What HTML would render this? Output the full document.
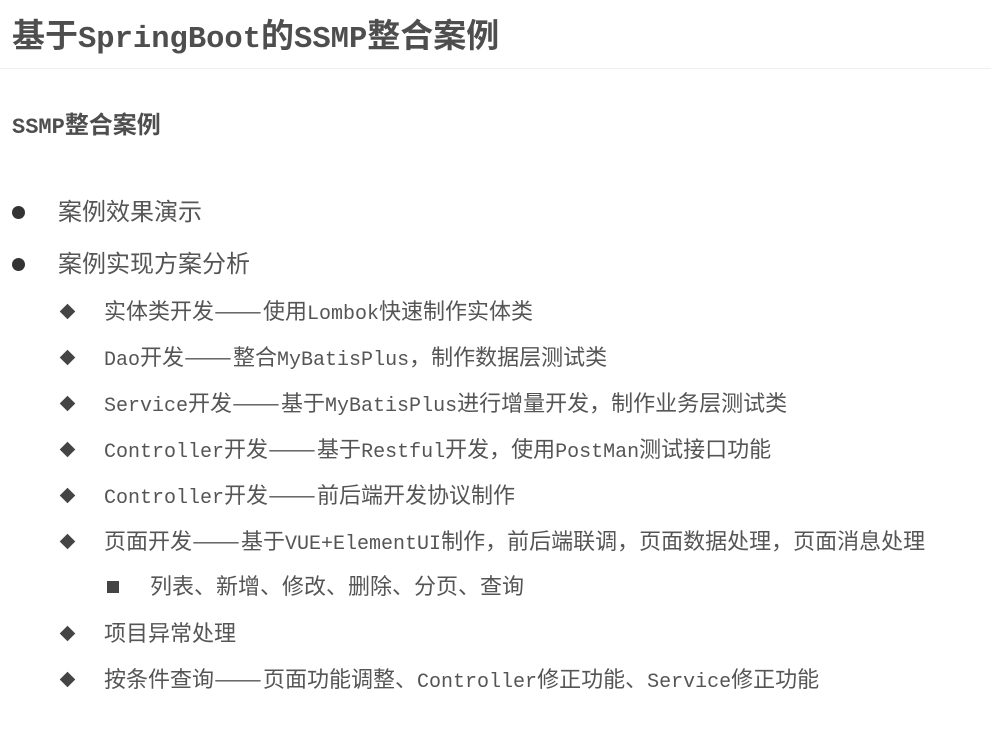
<!DOCTYPE html>
<html><head><meta charset="utf-8"><style>
html,body{margin:0;padding:0;background:#fff;width:991px;height:738px;overflow:hidden}
body{position:relative;font-family:"Noto Sans CJK SC","Liberation Sans",sans-serif;color:#555}
.m{font-family:"Liberation Mono","Noto Sans CJK SC",monospace}
.t{position:absolute;white-space:nowrap;line-height:1}
#title{left:12px;top:17px;font-size:33px;font-weight:bold;color:#4e4e4e}
#title .m{font-size:30.5px}
#hr{position:absolute;left:0;top:68px;width:991px;height:1px;background:#eee}
#sub{left:12px;top:111px;font-size:24px;font-weight:bold;color:#4e4e4e}
#sub .m{font-size:22px}
.l1{font-size:24px;left:58px}
.l2{font-size:22px;left:104px}
.l2 .m{font-size:20px}
.l3{font-size:22px;left:150px}
.d{display:inline-block;width:49px;transform:scaleX(1.3);transform-origin:left center}
.dot{position:absolute;left:12px;width:13px;height:13px;border-radius:50%;background:#333}
.dia{position:absolute;left:62px;width:11px;height:11px;background:#444;transform:rotate(45deg)}
.sq{position:absolute;left:107px;width:12px;height:12px;background:#444}
</style></head><body>
<div class="t" id="title">基于<span class="m">SpringBoot</span>的<span class="m">SSMP</span>整合案例</div>
<div id="hr"></div>
<div class="t" id="sub"><span class="m">SSMP</span>整合案例</div>

<div class="dot" style="top:206px"></div><div class="t l1" style="top:198px">案例效果演示</div>
<div class="dot" style="top:258px"></div><div class="t l1" style="top:250px">案例实现方案分析</div>

<div class="dia" style="top:306px"></div><div class="t l2" style="top:299px">实体类开发<span class="d">——</span>使用<span class="m">Lombok</span>快速制作实体类</div>
<div class="dia" style="top:352px"></div><div class="t l2" style="top:345px"><span class="m">Dao</span>开发<span class="d">——</span>整合<span class="m">MyBatisPlus</span>，制作数据层测试类</div>
<div class="dia" style="top:398px"></div><div class="t l2" style="top:391px"><span class="m">Service</span>开发<span class="d">——</span>基于<span class="m">MyBatisPlus</span>进行增量开发，制作业务层测试类</div>
<div class="dia" style="top:444px"></div><div class="t l2" style="top:437px"><span class="m">Controller</span>开发<span class="d">——</span>基于<span class="m">Restful</span>开发，使用<span class="m">PostMan</span>测试接口功能</div>
<div class="dia" style="top:490px"></div><div class="t l2" style="top:483px"><span class="m">Controller</span>开发<span class="d">——</span>前后端开发协议制作</div>
<div class="dia" style="top:536px"></div><div class="t l2" style="top:529px">页面开发<span class="d">——</span>基于<span class="m">VUE+ElementUI</span>制作，前后端联调，页面数据处理，页面消息处理</div>
<div class="sq" style="top:581px"></div><div class="t l3" style="top:574px">列表、新增、修改、删除、分页、查询</div>
<div class="dia" style="top:628px"></div><div class="t l2" style="top:621px">项目异常处理</div>
<div class="dia" style="top:674px"></div><div class="t l2" style="top:667px">按条件查询<span class="d">——</span>页面功能调整、<span class="m">Controller</span>修正功能、<span class="m">Service</span>修正功能</div>
</body></html>
